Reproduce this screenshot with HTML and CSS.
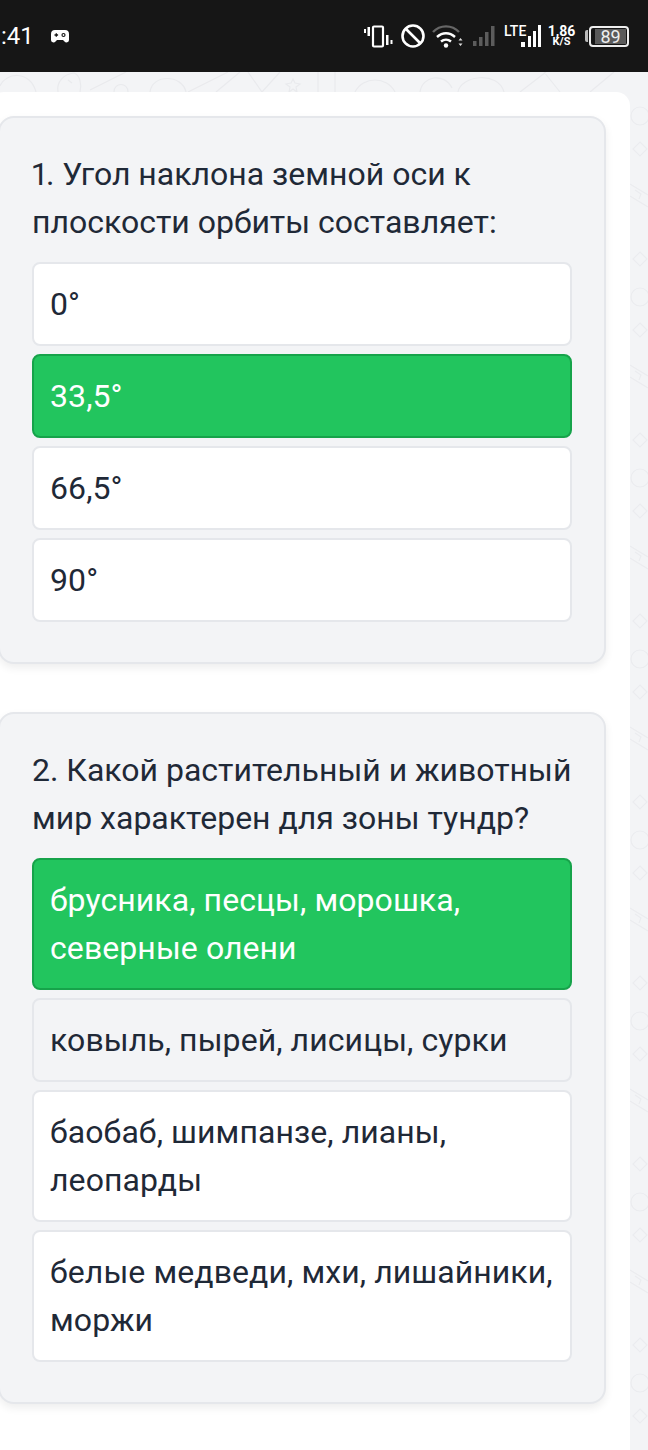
FILE: index.html
```html
<!DOCTYPE html>
<html lang="ru">
<head>
  <meta charset="UTF-8" />
  <title>Тест</title>
  <link rel="stylesheet" href="styles.css">
</head>
<body>

  <svg class="doodles" width="648" height="1450" aria-hidden="true">
    <defs>
      <pattern id="strip" x="630" y="100" width="18" height="181" patternUnits="userSpaceOnUse">
        <g fill="none" stroke="#ebecef" stroke-width="1.200">
          <circle cx="10" cy="16" r="9" />
          <path d="M10 42l7 7-7 7-7-7zM0 84l18 11M0 96l18 11M5 90l6 4-2 5M10 152l7 7-7 7-7-7z" />
        </g>
      </pattern>
    </defs>
    <g fill="none" stroke="#e9eaed" stroke-width="1.200">
      <path d="M0 86c6-14 30-16 36 6" />
      <path d="M58 92c-2-10 6-18 16-19 6 2 8 12 6 19" />
      <path d="M68 80l4 3M90 90l36-18M114 92c0-10 14-10 14 0M150 92c2-18 32-18 36 0" />
      <path d="M188 92l40-20M216 92l24-20M248 72l14 20 18-20" />
      <path d="M293 79l2 4 5 1-4 3 1 5-4-3-4 3 1-5-4-3 5-1z" />
      <path d="M318 72v20M335 72v20" />
      <path d="M355 92c8-16 32-16 40 0M420 92c2-16 24-20 32-4 M458 92c2-16 40-22 46 0M520 92l26-20M560 92l-16-20M590 92l24-20" />
    </g>
    <rect x="630" y="92" width="18" height="1358" fill="url(#strip)" />
  </svg>

  <div class="statusbar">
    <div class="status-left">
      <span class="clock">:41</span>
      <svg width="18" height="15" viewBox="0 0 18 15">
        <path fill="#fff" d="M4 1h10a4 4 0 0 1 4 4v6a2.500 2.500 0 0 1-4.500 1.500l-1.500-1.500h-6l-1.500 1.500a2.500 2.500 0 0 1-4.500-1.500v-6a4 4 0 0 1 4-4z" />
        <path stroke="#161616" stroke-width="1.300" d="M3.500 6h3.600M5.300 4.200v3.600" />
        <circle cx="12.500" cy="6" r="1.500" fill="none" stroke="#161616" stroke-width="1.200" />
      </svg>
    </div>
    <div class="status-right">
      <svg class="icon-vibrate" width="29" height="23" viewBox="0 0 29 23" fill="#fff">
        <rect x="0" y="4" width="2" height="4" /><rect x="3.500" y="2" width="2.500" height="9" />
        <rect x="9" y="1.500" width="10" height="20" fill="none" stroke="#fff" stroke-width="2.200" rx="1" />
        <rect x="22" y="10" width="2.500" height="10" /><rect x="26.500" y="15" width="2" height="4" />
      </svg>
      <svg class="icon-ban" width="24" height="24" viewBox="0 0 24 24" fill="none" stroke="#fff" stroke-width="2.600">
        <circle cx="12" cy="12" r="10.500" /><path d="M4.500 4.500l15 15" />
      </svg>
      <svg class="icon-wifi" width="31" height="23" viewBox="0 0 31 23" fill="none">
        <path d="M1 7c7-7.500 19-7.500 26 0" stroke="#666" stroke-width="2.400" />
        <path d="M5 12c5.500-5 12.500-5 18 0M9 16.500c3-2.500 7-2.500 10 0" stroke="#fff" stroke-width="2.400" />
        <circle cx="14" cy="20.500" r="2.200" fill="#fff" />
        <path d="M28.500 13l2 2.500h-4zM28.500 21l-2-2.500h4z" fill="#ddd" />
      </svg>
      <svg class="icon-bars-dim" width="22" height="21" viewBox="0 0 22 21" fill="#5c5c5c">
        <rect x="0" y="15" width="3.500" height="5" /><rect x="6" y="11" width="3.500" height="9" />
        <rect x="12" y="6" width="3.500" height="14" /><rect x="18" y="0" width="3.500" height="20" />
      </svg>
      <div class="lte">
        <span class="lte-label">LTE</span>
        <svg width="22" height="23" viewBox="0 0 22 23" fill="#fff">
          <rect x="2" y="17" width="4" height="5" /><rect x="9" y="11" width="3" height="11" />
          <rect x="14" y="6" width="3" height="16" /><rect x="19" y="0" width="3" height="22" />
        </svg>
      </div>
      <div class="speed"><span>1,86</span><span>K/S</span></div>
      <div class="battery">
        <span class="battery-cap"></span>
        <span class="battery-body"><span class="battery-level">89</span></span>
      </div>
    </div>
  </div>

  <div class="panel">

    <div class="question">
      <h2>1. Угол наклона земной оси к плоскости орбиты составляет:</h2>
      <div class="option">0°</div>
      <div class="option correct">33,5°</div>
      <div class="option">66,5°</div>
      <div class="option">90°</div>
    </div>

    <div class="question">
      <h2>2. Какой растительный и животный мир характерен для зоны тундр?</h2>
      <div class="option correct">брусника, песцы, морошка, северные олени</div>
      <div class="option muted">ковыль, пырей, лисицы, сурки</div>
      <div class="option">баобаб, шимпанзе, лианы, леопарды</div>
      <div class="option">белые медведи, мхи, лишайники, моржи</div>
    </div>

  </div>

</body>
</html>
```

FILE: styles.css
```css
html, body {
  height: 100%;
}

body {
  margin: 0;
  width: 648px;
  height: 1450px;
  overflow: hidden;
  position: relative;
  font-family: Roboto, "Liberation Sans", sans-serif;
  background-color: #f3f4f6;
  color: #1f2937;
}

.doodles {
  position: absolute;
  top: 0;
  left: 0;
}

.statusbar {
  position: relative;
  height: 72px;
  background-color: #161616;
  color: #fff;
  display: flex;
  justify-content: space-between;
  align-items: center;
  padding: 0 19px 0 1px;
  box-sizing: border-box;
}

.status-left {
  display: flex;
  align-items: center;
  gap: 17px;
}

.clock {
  font-size: 24px;
}

.status-right {
  display: flex;
  align-items: center;
}

.icon-ban {
  margin-left: 8px;
}

.icon-wifi {
  margin-left: 7px;
}

.icon-bars-dim {
  margin-left: 10px;
}

.lte {
  position: relative;
  display: flex;
  align-items: flex-end;
  justify-content: flex-end;
  width: 37px;
  height: 24px;
  margin-left: 9px;
}

.lte-label {
  position: absolute;
  left: 0;
  top: 0;
  font-size: 14px;
  font-weight: 500;
  line-height: 14px;
}

.speed {
  display: flex;
  flex-direction: column;
  align-items: center;
  width: 27px;
  margin-left: 7px;
  font-weight: 700;
  font-size: 14px;
  line-height: 12px;
}

.speed span:last-child {
  font-size: 11px;
  line-height: 10px;
}

.battery {
  display: flex;
  align-items: center;
  gap: 1px;
  margin-left: 10px;
}

.battery-cap {
  width: 3px;
  height: 12px;
  background-color: #bbb;
  border-radius: 2px 0 0 2px;
}

.battery-body {
  width: 40px;
  height: 21px;
  border: 2px solid #eee;
  border-radius: 4px;
  box-sizing: border-box;
  padding: 1px;
  display: flex;
}

.battery-level {
  width: 31px;
  margin-left: 3px;
  background-color: #5a5a5a;
  font-size: 18px;
  line-height: 15px;
  text-align: center;
  color: #eee;
}

.panel {
  position: relative;
  margin: 20px 18px 0 -10px;
  height: 1358px;
  padding: 24px 24px 0 8px;
  box-sizing: border-box;
  background-color: #fff;
  border-radius: 14px 14px 0 0;
}

.question {
  background-color: #f3f4f6;
  border: 2px solid #e5e7eb;
  border-radius: 16px;
  padding: 32px 32px 40px;
  margin-bottom: 48px;
  box-shadow: 0 4px 8px rgba(0, 0, 0, 0.07);
}

h2 {
  margin: 0 0 16px;
  font-size: 32px;
  font-weight: 400;
  line-height: 48px;
  font-variant-numeric: proportional-nums;
}

.option {
  background-color: #fff;
  border: 2px solid #e5e7eb;
  border-radius: 8px;
  padding: 16px;
  margin-bottom: 8px;
  font-size: 32px;
  line-height: 48px;
  letter-spacing: 0.08px;
}

.option:last-child {
  margin-bottom: 0;
}

.option.muted {
  background-color: #f3f4f6;
}

.option.correct {
  background-color: #22c55e;
  border-color: #16a34a;
  color: #fff;
}
```
